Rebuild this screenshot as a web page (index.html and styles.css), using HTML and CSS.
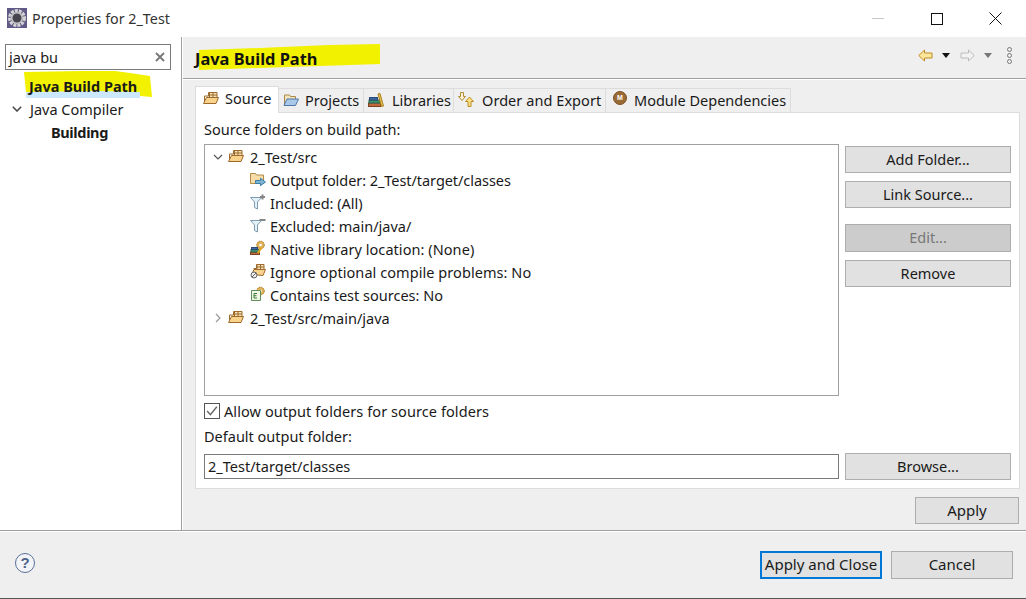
FILE: index.html
```html
<!DOCTYPE html>
<html lang="en">
<head>
<meta charset="utf-8">
<title>Properties for 2_Test</title>
<link rel="stylesheet" href="styles.css">
</head>
<body>
<svg class="sprite" width="0" height="0">
  <symbol id="pkg" viewBox="0 0 16 16">
    <path d="M1.500 6h4V2.500h8.500V10" fill="#f6e2b8" stroke="#9c6a2c"/>
    <path d="M6.500 2.500v5M10 2.500v5M5.500 5h8.500" fill="none" stroke="#9c6a2c"/>
    <path d="M.5 13.500 3.500 7.500h12l-2.500 6z" fill="#f9d28c" stroke="#9c6a2c"/>
    <path d="M1.500 6v6" stroke="#9c6a2c" fill="none"/>
  </symbol>
  <symbol id="folder-blue" viewBox="0 0 16 16">
    <path d="M1.500 13V3h5l1 1.500h5V7" fill="#f3e3ba" stroke="#a88a4a"/>
    <path d="M1 13.500 4 7h11.500l-3 6.500z" fill="#a9c8ea" stroke="#4f78a8"/>
  </symbol>
  <symbol id="books" viewBox="0 0 16 16">
    <rect x=".5" y="11" width="12" height="3.500" fill="#c0683a" stroke="#7d4224"/>
    <rect x="1" y="8" width="11" height="3" fill="#3d8f6e" stroke="#2a6a52"/>
    <rect x="1.500" y="5.500" width="8" height="2.500" fill="#3c6aa0" stroke="#2a4a78"/>
    <path d="M10 2 12 1.500 15.500 14l-2 .5z" fill="#f0c44a" stroke="#a57f20"/>
  </symbol>
  <symbol id="order" viewBox="0 0 16 16">
    <path d="M2.500 .5h3v4h2L4 8.500 .5 4.500h2z" fill="#fff4cf" stroke="#b08a35"/>
    <path d="M10 14.500v-5H7.500L11.500 5l4 4.500H13v5z" fill="#fbe08a" stroke="#c08e1e"/>
  </symbol>
  <symbol id="output" viewBox="0 0 16 16">
    <path d="M.5 12.500V2.500h5l1 1.500h7v8.500z" fill="#f5dca8" stroke="#b08c4a"/>
    <path d="M5.500 9.500H10.500V7.300l5 3.700-5 3.700V12.500h-5z" fill="#7db4d4" stroke="#3f7ea4"/>
  </symbol>
  <symbol id="filter-add" viewBox="0 0 16 16">
    <path d="M.5 3.500h11L7.500 8v7l-3-1.500V8z" fill="#e4f0f7" stroke="#7f9db2"/>
    <path d="M12.500 .5v5M10 3h5" stroke="#858585" stroke-width="2" fill="none"/>
  </symbol>
  <symbol id="filter-del" viewBox="0 0 16 16">
    <path d="M.5 3.500h11L7.500 8v7l-3-1.500V8z" fill="#e4f0f7" stroke="#7f9db2"/>
    <path d="M9.500 3h6" stroke="#858585" stroke-width="2" fill="none"/>
  </symbol>
  <symbol id="native" viewBox="0 0 16 16">
    <circle cx="10.500" cy="5" r="3.800" fill="#e0b258" stroke="#a87c2c" stroke-dasharray="1.500 .7"/>
    <circle cx="10.500" cy="5" r="1.300" fill="#fff"/>
    <rect x=".5" y="12" width="9" height="2.500" fill="#c0683a" stroke="#7d4224"/>
    <rect x="1" y="9.500" width="8" height="2.500" fill="#3d8f6e" stroke="#2a6a52"/>
    <rect x="1.500" y="7.500" width="6" height="2" fill="#3c6aa0" stroke="#2a4a78"/>
    <path d="M8 13 11.500 7.500" stroke="#e0a820" stroke-width="2.200"/>
  </symbol>
  <symbol id="ignore" viewBox="0 0 16 16">
    <path d="M3.500 5.500h3V1.500h7.500v8" fill="#f6e2b8" stroke="#9c6a2c"/>
    <path d="M7 1.500v5M10.500 1.500v5M6.500 4h7.500" fill="none" stroke="#9c6a2c"/>
    <path d="M1.500 11.500 4 6.500h11.500l-2.500 6z" fill="#f9d28c" stroke="#9c6a2c"/>
    <circle cx="4" cy="12" r="3" fill="#eee" stroke="#666"/>
    <path d="M2 14 6 10" stroke="#666"/>
  </symbol>
  <symbol id="test" viewBox="0 0 16 16">
    <circle cx="10.500" cy="5" r="3.800" fill="#e0b258" stroke="#a87c2c" stroke-dasharray="1.500 .7"/>
    <circle cx="10.500" cy="5" r="1.300" fill="#fff"/>
    <path d="M1.500 4.500h9v10h-9z" fill="#f2f6e6" stroke="#5f8f5a"/>
    <path d="M4 7.500v4.500h3M4 9.700h2.500M4 7.500h3" fill="none" stroke="#3c7a3c"/>
  </symbol>
  <symbol id="gear" viewBox="0 0 20 20">
    <rect width="20" height="20" fill="#5f5a86"/>
    <circle cx="10" cy="10" r="7.300" fill="none" stroke="#d2d2d2" stroke-width="3.400" stroke-dasharray="3 1"/>
    <circle cx="10" cy="10" r="6" fill="#c4c4c4"/>
    <circle cx="10" cy="10" r="4.500" fill="#45444f"/>
  </symbol>
</svg>

<div class="window">
  <header class="titlebar">
    <svg class="app-icon"><use href="#gear"/></svg>
    <span class="title">Properties for 2_Test</span>
    <div class="caption">
      <span class="cap-btn"><span class="cap-min"></span></span>
      <span class="cap-btn"><span class="cap-max"></span></span>
      <span class="cap-btn">
        <svg class="cap-close" viewBox="0 0 13 13"><path d="M.5.500l12 12M12.500.500l-12 12" stroke="#111" fill="none"/></svg>
      </span>
    </div>
  </header>

  <div class="main">
    <nav class="nav">
      <div class="search">
        <span class="search-text">java bu</span>
        <svg class="search-clear" viewBox="0 0 10 10"><path d="M1 1l8 8M9 1l-8 8" stroke="#777" stroke-width="1.800" fill="none"/></svg>
      </div>
      <div class="nav-tree">
        <div class="nav-row nav-row-selected">
          <span class="nav-sel-band"></span>
          <svg class="nav-mark" viewBox="0 0 128 28"><path d="M0 2 56 1 91 1 106 3 126 6 128 27 116 26 116 22 76 21 2 22z" fill="#f2f200"/></svg>
          <strong class="nav-label">Java Build Path</strong>
        </div>
        <div class="nav-row nav-row-parent">
          <svg class="twistie-big" viewBox="0 0 10 6"><path d="M.8.800 5 5l4.200-4.200" stroke="#444" stroke-width="1.500" fill="none"/></svg>
          <span>Java Compiler</span>
        </div>
        <div class="nav-row nav-row-child"><strong class="nav-child-label">Building</strong></div>
      </div>
    </nav>

    <section class="page">
      <div class="page-head">
        <svg class="head-mark" viewBox="0 0 181 27"><path d="M0 6 60 4 130 1 181 0 181 20 60 24 0 26z" fill="#f2f200"/></svg>
        <h1 class="page-title">Java Build Path</h1>
        <div class="page-tools">
          <svg class="tool-arrow" viewBox="0 0 15 13"><path d="M.8 6.500 6.500 1v3h7.500v5H6.500v3z" fill="#fde79a" stroke="#c08a20"/></svg>
          <span class="tool-drop"></span>
          <svg class="tool-arrow" viewBox="0 0 15 13"><path d="M14.200 6.500 8.500 1v3H1v5h7.500v3z" fill="#f2f2f2" stroke="#bcbcbc"/></svg>
          <span class="tool-drop tool-drop-off"></span>
          <span class="tool-dots"><i></i><i></i><i></i></span>
        </div>
      </div>

      <div class="page-body">
        <div class="tabs">
          <div class="tab tab-active tab-source"><svg class="icon"><use href="#pkg"/></svg><span>Source</span></div>
          <div class="tab tab-projects"><svg class="icon"><use href="#folder-blue"/></svg><span>Projects</span></div>
          <div class="tab tab-libs"><svg class="icon"><use href="#books"/></svg><span>Libraries</span></div>
          <div class="tab tab-order"><svg class="icon"><use href="#order"/></svg><span>Order and Export</span></div>
          <div class="tab tab-module"><span class="module-icon">M</span><span>Module Dependencies</span></div>
        </div>

        <div class="panel">
          <div class="panel-label">Source folders on build path:</div>
          <div class="source">
            <div class="tree">
              <div class="tree-row">
                <svg class="twistie" viewBox="0 0 10 6"><path d="M1 1l4 4 4-4" stroke="#555" stroke-width="1.200" fill="none"/></svg>
                <svg class="icon"><use href="#pkg"/></svg><span>2_Test/src</span>
              </div>
              <div class="tree-row tree-row-sub tree-row-tight"><svg class="icon"><use href="#output"/></svg><span>Output folder: 2_Test/target/classes</span></div>
              <div class="tree-row tree-row-sub"><svg class="icon"><use href="#filter-add"/></svg><span>Included: (All)</span></div>
              <div class="tree-row tree-row-sub"><svg class="icon"><use href="#filter-del"/></svg><span>Excluded: main/java/</span></div>
              <div class="tree-row tree-row-sub tree-row-wide"><svg class="icon"><use href="#native"/></svg><span>Native library location: (None)</span></div>
              <div class="tree-row tree-row-sub tree-row-wide"><svg class="icon"><use href="#ignore"/></svg><span>Ignore optional compile problems: No</span></div>
              <div class="tree-row tree-row-sub"><svg class="icon"><use href="#test"/></svg><span>Contains test sources: No</span></div>
              <div class="tree-row">
                <svg class="twistie twistie-closed" viewBox="0 0 6 10"><path d="M1 1l4 4-4 4" stroke="#999" stroke-width="1.200" fill="none"/></svg>
                <svg class="icon"><use href="#pkg"/></svg><span>2_Test/src/main/java</span>
              </div>
            </div>
            <div class="side">
              <button class="btn btn-wide">Add Folder...</button>
              <button class="btn btn-wide">Link Source...</button>
              <button class="btn btn-wide btn-disabled btn-gap">Edit...</button>
              <button class="btn btn-wide">Remove</button>
            </div>
          </div>
          <div class="check-row">
            <span class="check"><svg viewBox="0 0 13 13"><path d="M2 6.500 5 10l6-7.500" stroke="#666" stroke-width="1.300" fill="none"/></svg></span>
            <span>Allow output folders for source folders</span>
          </div>
          <div class="output-label">Default output folder:</div>
          <div class="output-row">
            <div class="field">2_Test/target/classes</div>
            <button class="btn btn-wide">Browse...</button>
          </div>
        </div>

        <div class="apply-row"><button class="btn btn-apply">Apply</button></div>
      </div>
    </section>
  </div>

  <footer class="footer">
    <span class="help">?</span>
    <div class="footer-btns">
      <button class="btn btn-foot btn-default">Apply and Close</button>
      <button class="btn btn-foot">Cancel</button>
    </div>
  </footer>
</div>
</body>
</html>
```
FILE: styles.css
```css
* { box-sizing: border-box; }
html, body { margin: 0; padding: 0; }
body {
  width: 1026px;
  height: 599px;
  overflow: hidden;
  font-family: "Noto Sans", "Noto Sans CJK KR", sans-serif;
  font-size: 14.5px;
  color: #1a1a1a;
  background: #fff;
}
.sprite { position: absolute; }

.window { display: flex; flex-direction: column; height: 599px; }

/* title bar */
.titlebar { height: 37px; display: flex; align-items: center; padding-left: 7px; flex: none; }
.app-icon { width: 20px; height: 20px; margin-right: 5px; margin-top: -1px; }
.title { font-size: 14.3px; color: #333; margin-top: -1px; }
.caption { margin-left: auto; display: flex; align-items: center; margin-right: 1px; }
.cap-btn { width: 59px; height: 36px; display: flex; align-items: center; justify-content: center; }
.cap-min { width: 12px; height: 1px; background: #c6c6c6; }
.cap-max { width: 12px; height: 12px; border: 1px solid #111; }
.cap-close { width: 13px; height: 13px; }

/* main split */
.main { flex: 1; display: flex; min-height: 0; border-bottom: 1px solid #a0a0a0; }
.nav { width: 182px; flex: none; border-right: 1px solid #a0a0a0; padding: 7px 10px 0 5px; }
.search { height: 26px; width: 166px; border: 1px solid #7a7a7a; display: flex; align-items: center; padding: 0 5px 0 3px; }
.search-text { flex: 1; }
.search-clear { width: 10px; height: 10px; }
.nav-tree { margin-top: 4px; }
.nav-row { position: relative; height: 23px; display: flex; align-items: center; }
.nav-row-selected { padding-left: 24px; }
.nav-sel-band { position: absolute; left: 21px; top: 1px; width: 114px; height: 23px; background: #cce8ff; }
.nav-mark { position: absolute; left: 19px; top: -4px; width: 128px; height: 28px; }
.nav-label { position: relative; }
.nav-child-label { letter-spacing: -.35px; }
.nav-row-parent { gap: 8px; padding-left: 7px; }
.nav-row-child { padding-left: 46px; }
.twistie-big { width: 10px; height: 6px; }
strong { font-weight: 700; }

/* page */
.page { flex: 1; min-width: 0; background: #efefef; display: flex; flex-direction: column; border-left: 1px solid #fff; }
.page-head { position: relative; height: 42px; flex: none; display: flex; align-items: center; padding-left: 12px; border-bottom: 1px solid #a0a0a0; box-shadow: 0 1px 0 #fff; }
.head-mark { position: absolute; left: 16px; top: 7px; width: 181px; height: 27px; }
.page-title { position: relative; margin: 1px 0 0; font-size: 16.4px; font-weight: 700; color: #111; }
.page-tools { margin-left: auto; margin-right: 14px; margin-top: -5px; display: flex; align-items: center; }
.tool-arrow { width: 15px; height: 13px; }
.tool-drop { width: 0; height: 0; border-style: solid; border-width: 5px 4.500px 0; border-color: #111 transparent transparent; margin: 0 10px 0 9px; }
.tool-drop-off { border-top-color: #777; margin: 0 15px 0 9px; }
.tool-dots { display: flex; flex-direction: column; gap: 1px; }
.tool-dots i { display: block; width: 5px; height: 5px; border: 1px solid #777; border-radius: 50%; }

.page-body { flex: 1; padding: 6px 6px 0 12px; min-height: 0; }
.tabs { display: flex; align-items: flex-end; height: 27px; }
.tab { height: 24px; display: flex; align-items: center; gap: 5px; padding: 0 0 2px 4px; border: 1px solid #dcdcdc; border-bottom: 0; border-left: 0; flex: none; background: #efefef; white-space: nowrap; }
.tab-active { height: 27px; background: #fff; padding: 0 0 4px 7px; border-left: 1px solid #dcdcdc; position: relative; margin-bottom: -1px; gap: 6px; z-index: 1; }
.tab-source { width: 84px; }
.tab-projects { width: 85px; }
.tab-projects span { margin-left: 1px; }
.tab-libs { width: 90px; gap: 8px; }
.tab-order { width: 152px; gap: 8px; letter-spacing: .06px; }
.tab-module { width: 185px; padding-left: 7px; gap: 7px; }
.module-icon { width: 14px; height: 14px; margin-bottom: 3px; border-radius: 50%; background: #9a6a35; border: 1px solid #7d5225; color: #fff; font: 700 7px/12px "Liberation Sans", sans-serif; text-align: center; flex: none; }
.icon { width: 16px; height: 16px; flex: none; }

.panel { height: 377px; background: #fff; border: 1px solid #dcdcdc; padding: 6px 7px 0 8px; }
.panel-label { height: 25px; line-height: 20px; }
.source { display: flex; gap: 6px; height: 252px; }
.tree { width: 635px; flex: none; border: 1px solid #a0a0a0; }
.tree-row { height: 23px; display: flex; align-items: center; padding-left: 8px; white-space: nowrap; }
.tree-row .icon { margin-right: 4px; margin-top: -1px; }
.twistie { width: 10px; height: 6px; margin-right: 5px; }
.tree-row .twistie + .icon { margin-right: 6px; }
.twistie-closed { width: 6px; height: 10px; margin: 0 7px 0 2px; }
.tree-row-sub { padding-left: 45px; }
.tree-row-wide { letter-spacing: .06px; }
.tree-row-tight { letter-spacing: -.06px; }
.side { width: 166px; flex: none; display: flex; flex-direction: column; padding-top: 2px; }
.btn { font: inherit; color: #1a1a1a; background: #e1e1e1; border: 1px solid #adadad; padding: 0 0 2px; }
.btn-wide { width: 166px; height: 27px; margin-bottom: 8px; flex: none; }
.btn-gap { margin-top: 8px; height: 28px; }
.btn-disabled { color: #777; background: #ccc; }
.check-row { display: flex; align-items: center; gap: 4px; height: 30px; letter-spacing: .08px; }
.check { width: 16px; height: 16px; border: 1px solid #555; display: flex; }
.check svg { width: 14px; height: 14px; }
.output-label { height: 21px; line-height: 21px; }
.output-row { display: flex; gap: 6px; height: 27px; align-items: center; margin-top: 6px; }
.field { width: 635px; height: 25px; border: 1px solid #7a7a7a; padding-left: 3px; line-height: 22px; flex: none; }
.output-row .btn-wide { margin: 0; }
.apply-row { display: flex; justify-content: flex-end; padding-top: 8px; padding-right: 1px; }
.btn-apply { width: 104px; height: 27px; font-size: 15px; }

/* footer */
.footer { height: 68px; flex: none; background: #efefef; border-top: 1px solid #fff; border-bottom: 1px solid #555; display: flex; align-items: center; padding: 0 13px 0 15px; }
.help { width: 20px; height: 20px; margin-top: -4px; border-radius: 50%; background: #f2f4f8; border: 1px solid #5a6f96; color: #4d6288; font: 700 15px/18px "Liberation Sans", sans-serif; text-align: center; }
.footer-btns { margin-left: auto; display: flex; gap: 9px; }
.btn-foot { width: 122px; height: 28px; font-size: 15px; }
.btn-default { border: 2px solid #0078d7; }
```
